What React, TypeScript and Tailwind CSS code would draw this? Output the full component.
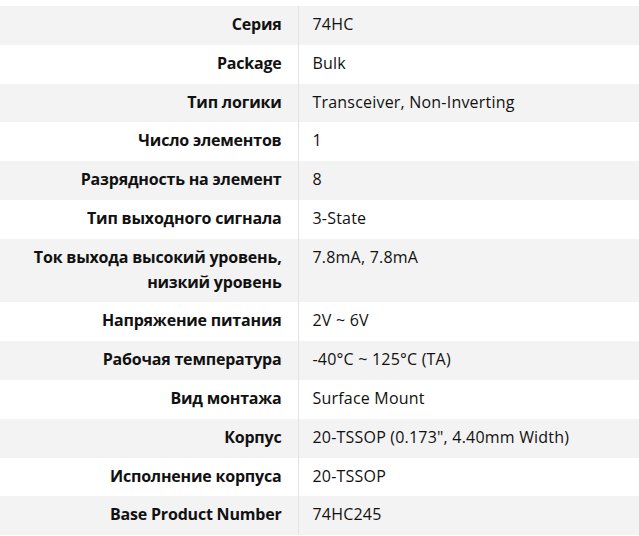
const rows: [string[], string][] = [
  [["Серия"], "74HC"],
  [["Package"], "Bulk"],
  [["Тип логики"], "Transceiver, Non-Inverting"],
  [["Число элементов"], "1"],
  [["Разрядность на элемент"], "8"],
  [["Тип выходного сигнала"], "3-State"],
  [["Ток выхода высокий уровень,", "низкий уровень"], "7.8mA, 7.8mA"],
  [["Напряжение питания"], "2V ~ 6V"],
  [["Рабочая температура"], "-40°C ~ 125°C (TA)"],
  [["Вид монтажа"], "Surface Mount"],
  [["Корпус"], "20-TSSOP (0.173\", 4.40mm Width)"],
  [["Исполнение корпуса"], "20-TSSOP"],
  [["Base Product Number"], "74HC245"],
];

export default function App() {
  return (
    <div
      className="w-[639px] h-[536px] overflow-hidden bg-white pt-[6px] text-[16px] leading-[24.8px] text-[#111]"
      style={{ fontFamily: '"Open Sans", "Noto Sans", sans-serif' }}
    >
      <table className="w-full border-collapse">
        <tbody>
          {rows.map(([label, value], i) => (
            <tr key={i} className={i % 2 === 0 ? "bg-[#f3f3f3]" : "bg-white"}>
              <td className="w-[298px] border-r border-[#e3e3e3] px-[16px] pt-[6px] pb-[8px] text-right align-top font-bold tracking-[-0.2px]">
                {label.map((l, j) => (
                  <div key={j}>{l}</div>
                ))}
              </td>
              <td className="px-[14px] pt-[6px] pb-[8px] align-top tracking-[0.2px]">{value}</td>
            </tr>
          ))}
        </tbody>
      </table>
    </div>
  );
}
